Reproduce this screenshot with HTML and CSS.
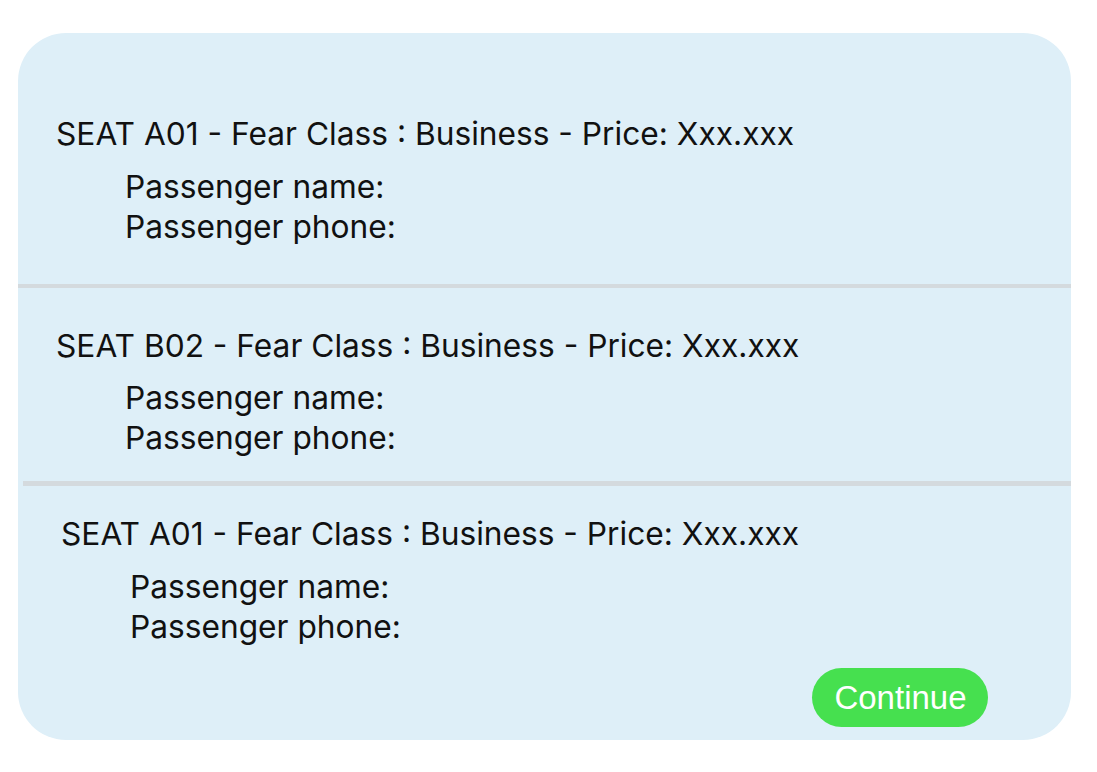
FILE: index.html
```html
<!DOCTYPE html>
<html lang="en">
<head>
<meta charset="utf-8">
<title>Seat booking</title>
<link rel="stylesheet" href="styles.css">
</head>
<body>
<div class="card">
  <section class="seat seat-first">
    <div class="seat-title">SEAT A01 - Fear Class : Business - Price: Xxx.xxx</div>
    <div class="fields">
      <div class="field">Passenger name:</div>
      <div class="field">Passenger phone:</div>
    </div>
  </section>
  <hr class="divider">
  <section class="seat seat-second">
    <div class="seat-title">SEAT B02 - Fear Class : Business - Price: Xxx.xxx</div>
    <div class="fields">
      <div class="field">Passenger name:</div>
      <div class="field">Passenger phone:</div>
    </div>
  </section>
  <hr class="divider divider-inset">
  <section class="seat seat-third">
    <div class="seat-title">SEAT A01 - Fear Class : Business - Price: Xxx.xxx</div>
    <div class="fields">
      <div class="field">Passenger name:</div>
      <div class="field">Passenger phone:</div>
    </div>
    <div class="actions">
      <button class="continue">Continue</button>
    </div>
  </section>
</div>
</body>
</html>
```
FILE: styles.css
```css
* { box-sizing: border-box; }
html, body { margin: 0; padding: 0; background: #ffffff; }
body {
  font-family: Inter, "Noto Sans", sans-serif;
  color: #111111;
  padding: 33px 0 0 18px;
}
.card {
  width: 1053px;
  height: 707px;
  background: #deeff8;
  border-radius: 48px;
  display: flex;
  flex-direction: column;
  overflow: hidden;
}
.seat {
  padding-left: 38px;
  font-size: 31.7px;
  line-height: 40px;
}
.seat-first { padding-top: 81px; height: 251px; }
.seat-second { padding-top: 38px; height: 193px; }
.seat-third { padding-top: 28px; padding-left: 43px; flex: 1; }
.seat-title { height: 40px; }
.fields { margin-top: 13px; padding-left: 69px; }
.seat-second .fields { margin-top: 12px; }
.field { height: 40px; }
.divider {
  margin: 0;
  border: none;
  height: 4px;
  background: #d4dade;
  flex: none;
}
.divider-inset { height: 5px; margin-left: 5px; }
.actions {
  display: flex;
  justify-content: flex-end;
  padding-right: 83px;
  margin-top: 21px;
}
.continue {
  font-family: "Liberation Sans", Arial, sans-serif;
  font-size: 33px;
  color: #ffffff;
  background: #46e04f;
  border: none;
  border-radius: 30px;
  width: 176px;
  height: 59px;
  padding: 0 0 0 1px;
  line-height: 59px;
  text-align: center;
}
```
